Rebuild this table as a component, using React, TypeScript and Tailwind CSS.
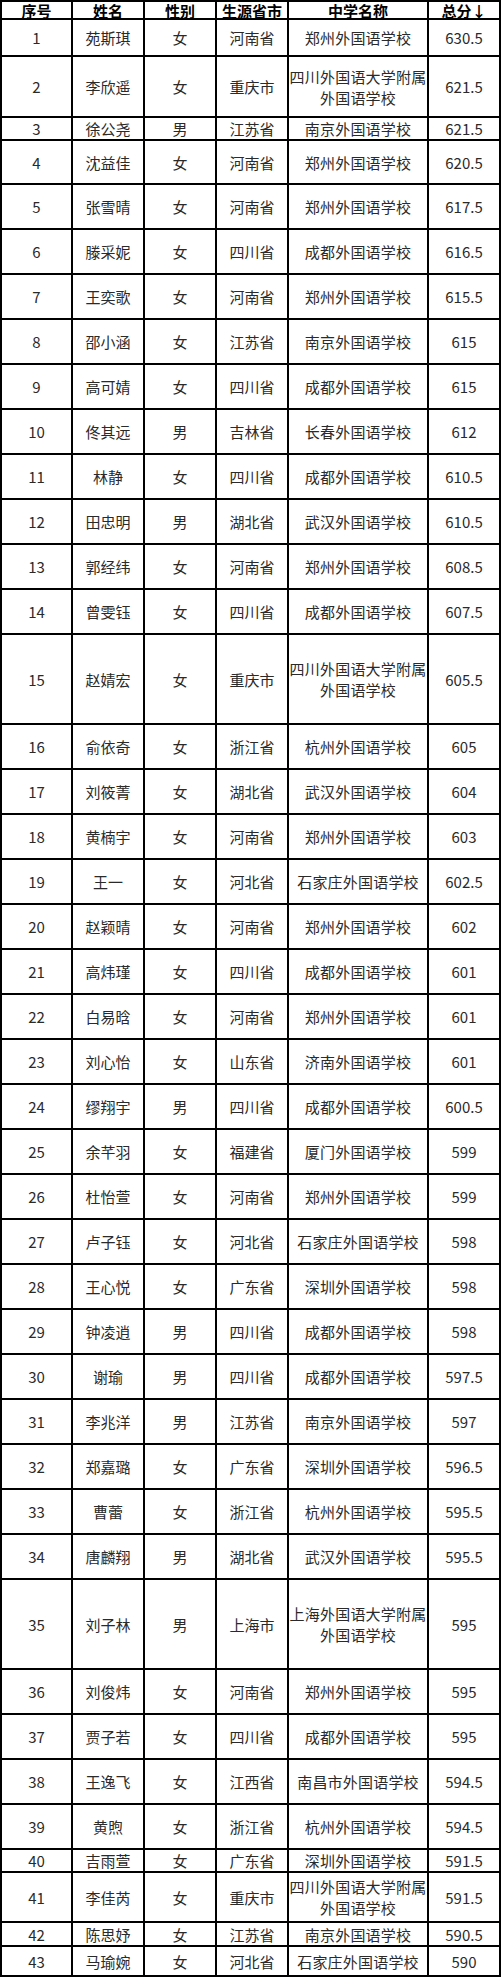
import React from "react";

type Row = [number, string, string, string, string, string];

const rows: Row[] = [
  [1, "苑斯琪", "女", "河南省", "郑州外国语学校", "630.5"],
  [2, "李欣遥", "女", "重庆市", "四川外国语大学附属|外国语学校", "621.5"],
  [3, "徐公尧", "男", "江苏省", "南京外国语学校", "621.5"],
  [4, "沈益佳", "女", "河南省", "郑州外国语学校", "620.5"],
  [5, "张雪晴", "女", "河南省", "郑州外国语学校", "617.5"],
  [6, "滕采妮", "女", "四川省", "成都外国语学校", "616.5"],
  [7, "王奕歌", "女", "河南省", "郑州外国语学校", "615.5"],
  [8, "邵小涵", "女", "江苏省", "南京外国语学校", "615"],
  [9, "高可婧", "女", "四川省", "成都外国语学校", "615"],
  [10, "佟其远", "男", "吉林省", "长春外国语学校", "612"],
  [11, "林静", "女", "四川省", "成都外国语学校", "610.5"],
  [12, "田忠明", "男", "湖北省", "武汉外国语学校", "610.5"],
  [13, "郭经纬", "女", "河南省", "郑州外国语学校", "608.5"],
  [14, "曾雯钰", "女", "四川省", "成都外国语学校", "607.5"],
  [15, "赵婧宏", "女", "重庆市", "四川外国语大学附属|外国语学校", "605.5"],
  [16, "俞依奇", "女", "浙江省", "杭州外国语学校", "605"],
  [17, "刘筱菁", "女", "湖北省", "武汉外国语学校", "604"],
  [18, "黄楠宇", "女", "河南省", "郑州外国语学校", "603"],
  [19, "王一", "女", "河北省", "石家庄外国语学校", "602.5"],
  [20, "赵颖晴", "女", "河南省", "郑州外国语学校", "602"],
  [21, "高炜瑾", "女", "四川省", "成都外国语学校", "601"],
  [22, "白易晗", "女", "河南省", "郑州外国语学校", "601"],
  [23, "刘心怡", "女", "山东省", "济南外国语学校", "601"],
  [24, "缪翔宇", "男", "四川省", "成都外国语学校", "600.5"],
  [25, "余芊羽", "女", "福建省", "厦门外国语学校", "599"],
  [26, "杜怡萱", "女", "河南省", "郑州外国语学校", "599"],
  [27, "卢子钰", "女", "河北省", "石家庄外国语学校", "598"],
  [28, "王心悦", "女", "广东省", "深圳外国语学校", "598"],
  [29, "钟凌逍", "男", "四川省", "成都外国语学校", "598"],
  [30, "谢瑜", "男", "四川省", "成都外国语学校", "597.5"],
  [31, "李兆洋", "男", "江苏省", "南京外国语学校", "597"],
  [32, "郑嘉璐", "女", "广东省", "深圳外国语学校", "596.5"],
  [33, "曹蕾", "女", "浙江省", "杭州外国语学校", "595.5"],
  [34, "唐麟翔", "男", "湖北省", "武汉外国语学校", "595.5"],
  [35, "刘子林", "男", "上海市", "上海外国语大学附属|外国语学校", "595"],
  [36, "刘俊炜", "女", "河南省", "郑州外国语学校", "595"],
  [37, "贾子若", "女", "四川省", "成都外国语学校", "595"],
  [38, "王逸飞", "女", "江西省", "南昌市外国语学校", "594.5"],
  [39, "黄煦", "女", "浙江省", "杭州外国语学校", "594.5"],
  [40, "吉雨萱", "女", "广东省", "深圳外国语学校", "591.5"],
  [41, "李佳芮", "女", "重庆市", "四川外国语大学附属|外国语学校", "591.5"],
  [42, "陈思妤", "女", "江苏省", "南京外国语学校", "590.5"],
  [43, "马瑜婉", "女", "河北省", "石家庄外国语学校", "590"],
];

const heightClass: Record<number, string> = {
  1: "h-[35px]",
  2: "h-[59px]",
  3: "h-[21px]",
  4: "h-[42px]",
  15: "h-[88px]",
  35: "h-[88px]",
  40: "h-[21px]",
  41: "h-[48px]",
  42: "h-[22px]",
  43: "h-[28px]",
};

const headers = ["序号", "姓名", "性别", "生源省市", "中学名称", "总分↓"];

function Cell({ h, children }: { h: string; children: React.ReactNode }) {
  return (
    <div
      className={`${h} bg-white flex flex-col items-center justify-center text-center text-[15px] leading-[21px] text-[#2a2a2a] whitespace-nowrap overflow-hidden`}
    >
      {children}
    </div>
  );
}

export default function App() {
  return (
    <div
      className="w-[503px] min-h-[1983px] bg-white"
      style={{ fontFamily: '"Noto Sans CJK SC", "Noto Sans", sans-serif' }}
    >
      <div className="w-[501px] grid grid-cols-[69px_70px_70px_70px_138px_70px] gap-[2px] p-[2px] bg-black">
        {headers.map((t) => (
          <div
            key={t}
            className="h-[16px] bg-white flex items-center justify-center text-[15px] leading-none font-bold text-black whitespace-nowrap"
          >
            {t}
          </div>
        ))}
        {rows.map((r) => {
          const h = heightClass[r[0]] ?? "h-[43px]";
          const school = r[4].split("|");
          return (
            <React.Fragment key={r[0]}>
              <Cell h={h}>{r[0]}</Cell>
              <Cell h={h}>{r[1]}</Cell>
              <Cell h={h}>{r[2]}</Cell>
              <Cell h={h}>{r[3]}</Cell>
              <Cell h={h}>
                {school.map((s, i) => (
                  <span key={i} className="block tracking-[0.2px]">
                    {s}
                  </span>
                ))}
              </Cell>
              <Cell h={h}>{r[5]}</Cell>
            </React.Fragment>
          );
        })}
      </div>
    </div>
  );
}
